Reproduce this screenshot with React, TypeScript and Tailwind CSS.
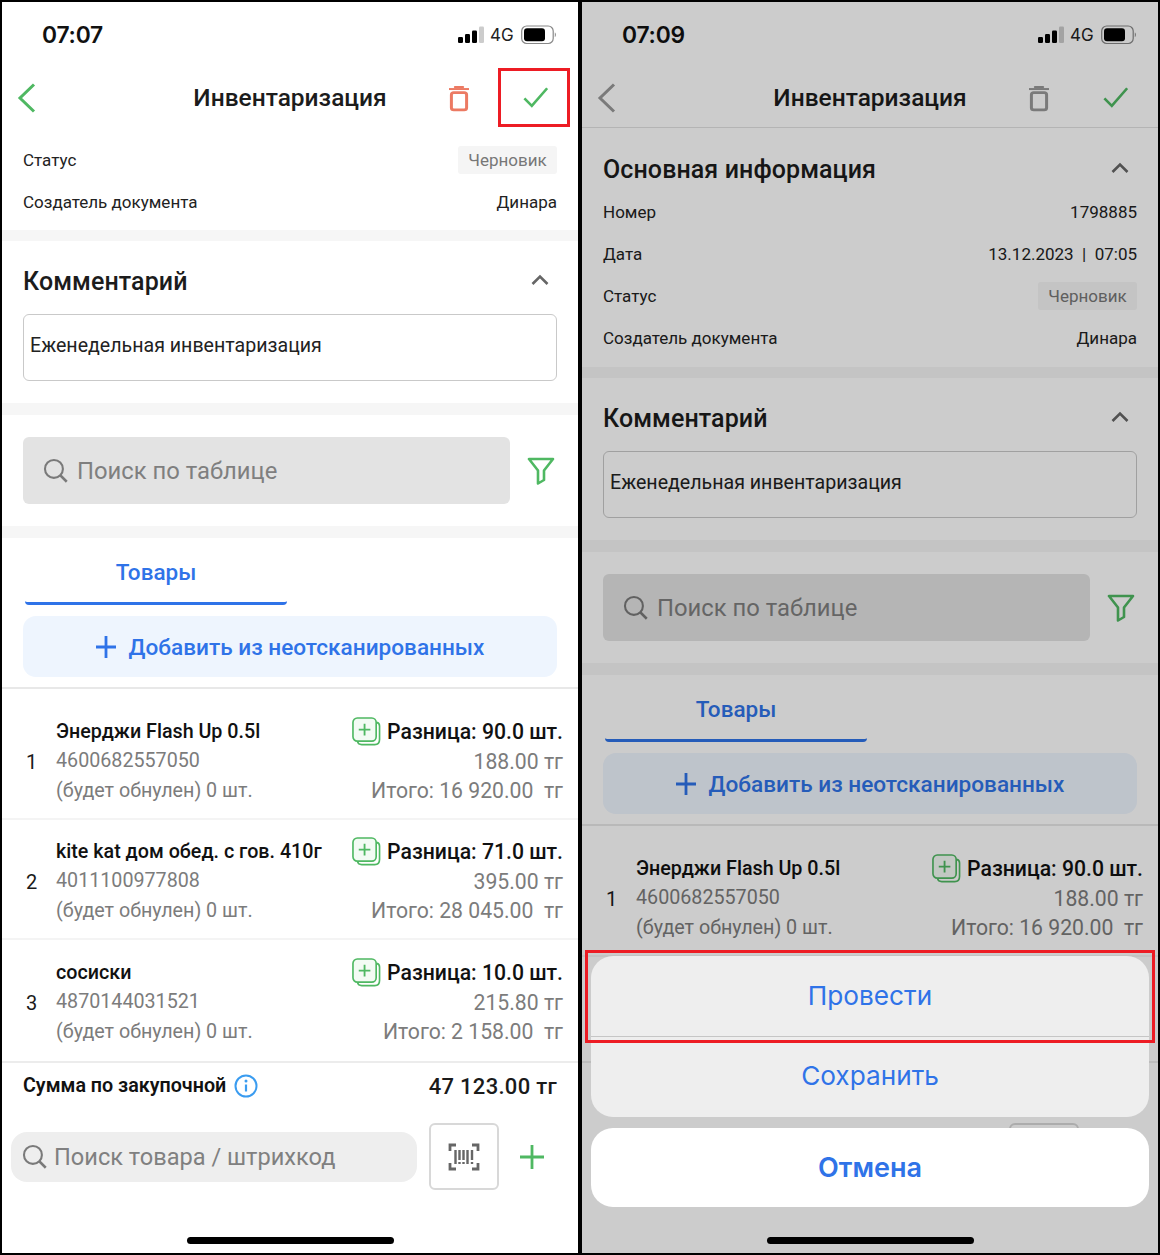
import React from "react";

const GREEN = "#4fb862";

function Signal() {
  return (
    <svg width="27" height="18" viewBox="0 0 27 18" className="block">
      <rect x="0" y="11" width="5" height="6" rx="1.2" fill="#000" />
      <rect x="7" y="8" width="5" height="9" rx="1.2" fill="#000" />
      <rect x="14" y="4.5" width="5" height="12.5" rx="1.2" fill="#000" />
      <rect x="21" y="0.5" width="5" height="16.5" rx="1.2" fill="#000" fillOpacity="0.2" />
    </svg>
  );
}

function Battery() {
  return (
    <svg width="36" height="20" viewBox="0 0 36 20" className="block">
      <rect x="0.7" y="1" width="31.5" height="17.5" rx="5" fill="none" stroke="#888" strokeWidth="1.2" />
      <rect x="3" y="3.2" width="21" height="13" rx="3" fill="#000" />
      <path d="M33.8 7.5c1.4.5 1.4 4 0 4.5z" fill="#888" />
    </svg>
  );
}

function StatusBar({ time }: { time: string }) {
  return (
    <div className="h-[66px] shrink-0 flex items-center justify-between pl-[40px] pr-[21px]">
      <span className="font-['Inter',sans-serif] text-[22.8px] font-semibold text-[#111] tracking-[-0.2px]">{time}</span>
      <div className="flex items-center">
        <Signal />
        <span className="font-['Inter',sans-serif] text-[17px] text-[#222] ml-[5px] mr-[7px] w-[24px] leading-none">4G</span>
        <Battery />
      </div>
    </div>
  );
}

function Trash({ color }: { color: string }) {
  return (
    <svg width="22" height="27" viewBox="0 0 22 30" fill="none" className="block" preserveAspectRatio="none">
      <path d="M1 4.5h20" stroke={color} strokeWidth="2.2" />
      <path d="M7 2.3h8" stroke={color} strokeWidth="2.4" strokeLinecap="round" />
      <rect x="3.4" y="8.4" width="15.2" height="19.2" rx="2.4" stroke={color} strokeWidth="3" />
    </svg>
  );
}

function Header({ backColor, trashColor, border }: { backColor: string; trashColor: string; border?: boolean }) {
  return (
    <div className={`h-[60px] relative flex items-center justify-center shrink-0 ${border ? "border-b border-[#e2e2e2]" : ""}`}>
      <span className="font-['Roboto',sans-serif] text-[24.5px] font-medium text-[#1c1c1c] pt-[1px]">Инвентаризация</span>
      <svg width="20" height="32" viewBox="0 0 20 32" fill="none" className="absolute left-[15px] top-[14px]">
        <path d="M17 2.5 3 16l14 13.5" stroke={backColor} strokeWidth="3" />
      </svg>
      <div className="absolute left-[446px] top-[17px]">
        <Trash color={trashColor} />
      </div>
      <svg width="26" height="21" viewBox="0 0 28 24" fill="none" className="absolute left-[521px] top-[19px]" preserveAspectRatio="none">
        <path d="M1.5 13 9.5 21.5 26 1.5" stroke={GREEN} strokeWidth="2.8" />
      </svg>
    </div>
  );
}

function InfoRow({ label, value, badge }: { label: string; value: string; badge?: boolean }) {
  return (
    <div className="h-[42px] flex items-center justify-between text-[17px] text-[#222]">
      <span className="pt-[2px]">{label}</span>
      {badge ? (
        <span className="h-[28px] w-[99px] flex items-center justify-center rounded-[3px] bg-[#f5f5f5] text-[#777] pt-[1px]">{value}</span>
      ) : (
        <span className="pt-[2px] whitespace-pre">{value}</span>
      )}
    </div>
  );
}

function Band({ h }: { h: string }) {
  return <div className={`${h} bg-[#f6f6f6] shrink-0`} />;
}

function Chevron() {
  return (
    <svg width="18" height="12" viewBox="0 0 18 12" fill="none" className="block">
      <path d="M1.5 10 9 2.5l7.5 7.5" stroke="#666" strokeWidth="2.6" />
    </svg>
  );
}

function SearchGlyph({ size }: { size: number }) {
  return (
    <svg width={size} height={size} viewBox="0 0 24 24" fill="none" className="block shrink-0">
      <circle cx="10.5" cy="10.5" r="8.6" stroke="#7a7a7a" strokeWidth="2" />
      <path d="m16.8 16.8 6 6" stroke="#7a7a7a" strokeWidth="2.4" />
    </svg>
  );
}

function Funnel() {
  return (
    <svg width="28" height="28" viewBox="0 0 28 28" fill="none" className="block">
      <path d="M2 2h24L17 13.5v9.5l-6 3.5V13.5z" stroke={GREEN} strokeWidth="2.6" strokeLinejoin="round" />
    </svg>
  );
}

function PlusStack() {
  return (
    <svg width="29" height="30" viewBox="0 0 30 31" fill="none" className="block shrink-0">
      <path d="M25.5 5.5c2 .4 3 1.6 3 3.8v14c0 3.4-2 5.2-5 5.2H10c-2.3 0-3.8-1-4.3-3" stroke={GREEN} strokeWidth="1.7" />
      <rect x="1" y="1" width="24" height="24" rx="4.5" stroke={GREEN} strokeWidth="1.7" fill="#f3fbf4" />
      <path d="M13 7v12M7 13h12" stroke={GREEN} strokeWidth="1.9" />
    </svg>
  );
}

function Item({ n, name, code, diff, price, total, last }: { n: string; name: string; code: string; diff: string; price: string; total: string; last?: boolean }) {
  return (
    <div className={`h-[120px] shrink-0 flex items-center pr-[15px] pt-[4px] ${last ? "" : "border-b-2 border-[#f4f4f4]"}`}>
      <span className="w-[54px] pl-[24px] text-[#1a1a1a] text-[20px] shrink-0 pt-[1px]">{n}</span>
      <div className="flex-1 min-w-0 leading-[29.5px] text-[19.7px] text-[#7c7c7c]">
        <div className="text-[#111] font-medium">{name}</div>
        <div>{code}</div>
        <div>(будет обнулен) 0 шт.</div>
      </div>
      <div className="text-right leading-[29.5px] text-[21.2px] text-[#7c7c7c] shrink-0">
        <div className="flex items-center justify-end gap-[6px] text-[#111] font-medium">
          <PlusStack />
          <span>{diff}</span>
        </div>
        <div>{price}</div>
        <div className="whitespace-pre">{total}</div>
      </div>
    </div>
  );
}

function Barcode() {
  return (
    <svg width="32" height="28" viewBox="0 0 32 28" fill="none" className="block">
      <path d="M8 2H2v6M24 2h6v6M8 26H2v-6M24 26h6v-6" stroke="#666" strokeWidth="2.8" />
      <path d="M7.5 7v14M11.5 7v10M15.5 7v10M19.5 7v14M24 7v10M11.5 19v2M15.5 19v2M24 19v2" stroke="#666" strokeWidth="2.4" />
    </svg>
  );
}

function Footer({ covered }: { covered?: boolean }) {
  return (
    <div className="h-[192px] shrink-0 border-t-2 border-[#ececec] relative">
      {covered ? (
        <div className="h-[46px]" />
      ) : (
        <div className="h-[46px] flex items-center justify-between pl-[21px] pr-[21px]">
          <div className="flex items-center gap-[8px]">
            <span className="text-[19.7px] font-semibold text-[#111]">Сумма по закупочной</span>
            <svg width="24" height="24" viewBox="0 0 24 24" fill="none" className="block">
              <circle cx="12" cy="12" r="10.5" stroke="#3a9cf0" strokeWidth="2" />
              <path d="M12 10.5v7" stroke="#3a9cf0" strokeWidth="2.2" />
              <circle cx="12" cy="7" r="1.5" fill="#3a9cf0" />
            </svg>
          </div>
          <span className="text-[22px] font-medium text-[#1a1a1a] tracking-[0.3px]">47 123.00 тг</span>
        </div>
      )}
      <div className="flex items-center pl-[9px] mt-[14px]">
        {covered ? (
          <div className="w-[406px] h-[50px]" />
        ) : (
          <div className="w-[406px] h-[50px] rounded-[16px] bg-[#eeeeee] flex items-center pl-[11px] gap-[7px]">
            <SearchGlyph size={25} />
            <span className="text-[23.6px] text-[#808080] pt-[2px]">Поиск товара / штрихкод</span>
          </div>
        )}
        <div className="ml-[12px] w-[70px] h-[67px] rounded-[6px] border-2 border-[#d8d8d8] bg-white flex items-center justify-center">
          <Barcode />
        </div>
        <svg width="24" height="24" viewBox="0 0 24 24" fill="none" className="block ml-[21px]">
          <path d="M12 0v24M0 12h24" stroke={GREEN} strokeWidth="2.8" />
        </svg>
      </div>
      <div className="absolute left-[185px] bottom-[9px] w-[207px] h-[7px] rounded-full bg-black" />
    </div>
  );
}

function Body({ firstOnly }: { firstOnly?: boolean }) {
  return (
    <>
      <div className="h-[162px] pl-[21px] pr-[21px] pt-[1px]">
        <div className="h-[72px] flex items-center justify-between pr-[8px]">
          <span className="font-medium text-[25px] text-[#1c1c1c] tracking-[0.1px] pt-[8px]">Комментарий</span>
          <div className="pt-[4px]">
            <Chevron />
          </div>
        </div>
        <div className="h-[67px] rounded-[6px] border border-[#c9c9c9] bg-white flex items-center px-[6px] pb-[3px] text-[19.6px] text-[#222]">
          Еженедельная инвентаризация
        </div>
      </div>
      <Band h="h-[12px]" />
      <div className="h-[111px] pl-[21px] pr-[21px] flex items-center justify-between">
        <div className="w-[487px] h-[67px] rounded-[6px] bg-[#e3e3e3] flex items-center pl-[20px] gap-[9px]">
          <SearchGlyph size={25} />
          <span className="text-[23.8px] text-[#7f7f7f] pt-[2px]">Поиск по таблице</span>
        </div>
        <div className="mr-[2px]">
          <Funnel />
        </div>
      </div>
      <Band h="h-[12px]" />
      <div className="h-[151px] border-b-2 border-[#e8e8e8] pl-[21px] pr-[21px] shrink-0">
        <div className="ml-[2px] w-[262px] h-[67px] border-b-[3px] border-[#2f73e8] rounded-b-[4px] flex items-center justify-center pt-[6px]">
          <span className="text-[22.5px] font-medium text-[#2f73e8]">Товары</span>
        </div>
        <div className="mt-[11px] h-[61px] rounded-[13px] bg-[#eef5fe] flex items-center justify-center gap-[13px]">
          <svg width="20" height="22" viewBox="0 0 20 22" fill="none" className="block">
            <path d="M10 0v22M0 11h20" stroke="#2f73e8" strokeWidth="2.8" />
          </svg>
          <span className="text-[22.6px] font-medium text-[#2f73e8] pt-[3px]">Добавить из неотсканированных</span>
        </div>
      </div>
      <div className="pt-[11px]">
        <Item n="1" name="Энерджи Flash Up 0.5l" code="4600682557050" diff="Разница: 90.0 шт." price="188.00 тг" total="Итого: 16 920.00  тг" />
        {!firstOnly && (
          <>
            <Item n="2" name="kite kat дом обед. с гов. 410г" code="4011100977808" diff="Разница: 71.0 шт." price="395.00 тг" total="Итого: 28 045.00  тг" />
            <Item n="3" name="сосиски" code="4870144031521" diff="Разница: 10.0 шт." price="215.80 тг" total="Итого: 2 158.00  тг" last />
          </>
        )}
      </div>
    </>
  );
}

function Sheet() {
  return (
    <div className="absolute inset-0 bg-black/20">
      <div className="absolute left-[9px] right-[9px] top-[954px] font-['Inter',sans-serif] text-[#2f73e8]">
        <div className="rounded-[22px] overflow-hidden bg-[#eeeeee] text-[26.2px]">
          <div className="h-[81px] flex items-center justify-center border-b border-[#c6c6c6]">Провести</div>
          <div className="h-[80px] flex items-center justify-center pb-[2px]">Сохранить</div>
        </div>
        <div className="mt-[11px] h-[79px] rounded-[22px] bg-white flex items-center justify-center text-[27px] font-semibold pt-[1px]">Отмена</div>
      </div>
    </div>
  );
}

export default function App() {
  return (
    <div className="w-[1160px] h-[1255px] bg-black flex gap-[4px] p-[2px] font-['Roboto',sans-serif] overflow-hidden">
      <div className="w-[576px] h-full bg-white relative flex flex-col overflow-hidden">
        <StatusBar time="07:07" />
        <Header backColor={GREEN} trashColor="#ec7a63" />
        <div className="flex-1 min-h-0 overflow-hidden">
          <div className="h-[102px] pl-[21px] pr-[21px] pt-[11px] pb-[7px]">
            <InfoRow label="Статус" value="Черновик" badge />
            <InfoRow label="Создатель документа" value="Динара" />
          </div>
          <Band h="h-[11px]" />
          <Body />
        </div>
        <Footer />
        <div className="absolute left-[496px] top-[66px] w-[72px] h-[59px] border-[3px] border-[#ed1c24]" />
      </div>
      <div className="w-[576px] h-full bg-white relative flex flex-col overflow-hidden">
        <StatusBar time="07:09" />
        <Header backColor="#999" trashColor="#999" border />
        <div className="flex-1 min-h-0 overflow-hidden">
          <div className="h-[239px] pl-[21px] pr-[21px]">
            <div className="h-[63px] flex items-center justify-between pr-[8px] pt-[17px]">
              <span className="font-medium text-[25px] text-[#1c1c1c] tracking-[0.1px] pt-[3px]">Основная информация</span>
              <Chevron />
            </div>
            <InfoRow label="Номер" value="1798885" />
            <InfoRow label="Дата" value="13.12.2023  |  07:05" />
            <InfoRow label="Статус" value="Черновик" badge />
            <InfoRow label="Создатель документа" value="Динара" />
          </div>
          <Band h="h-[11px]" />
          <Body firstOnly />
        </div>
        <Footer covered />
        <Sheet />
        <div className="absolute left-[3px] right-[3px] top-[948px] h-[93px] border-[3px] border-[#ed1c24]" />
      </div>
    </div>
  );
}
